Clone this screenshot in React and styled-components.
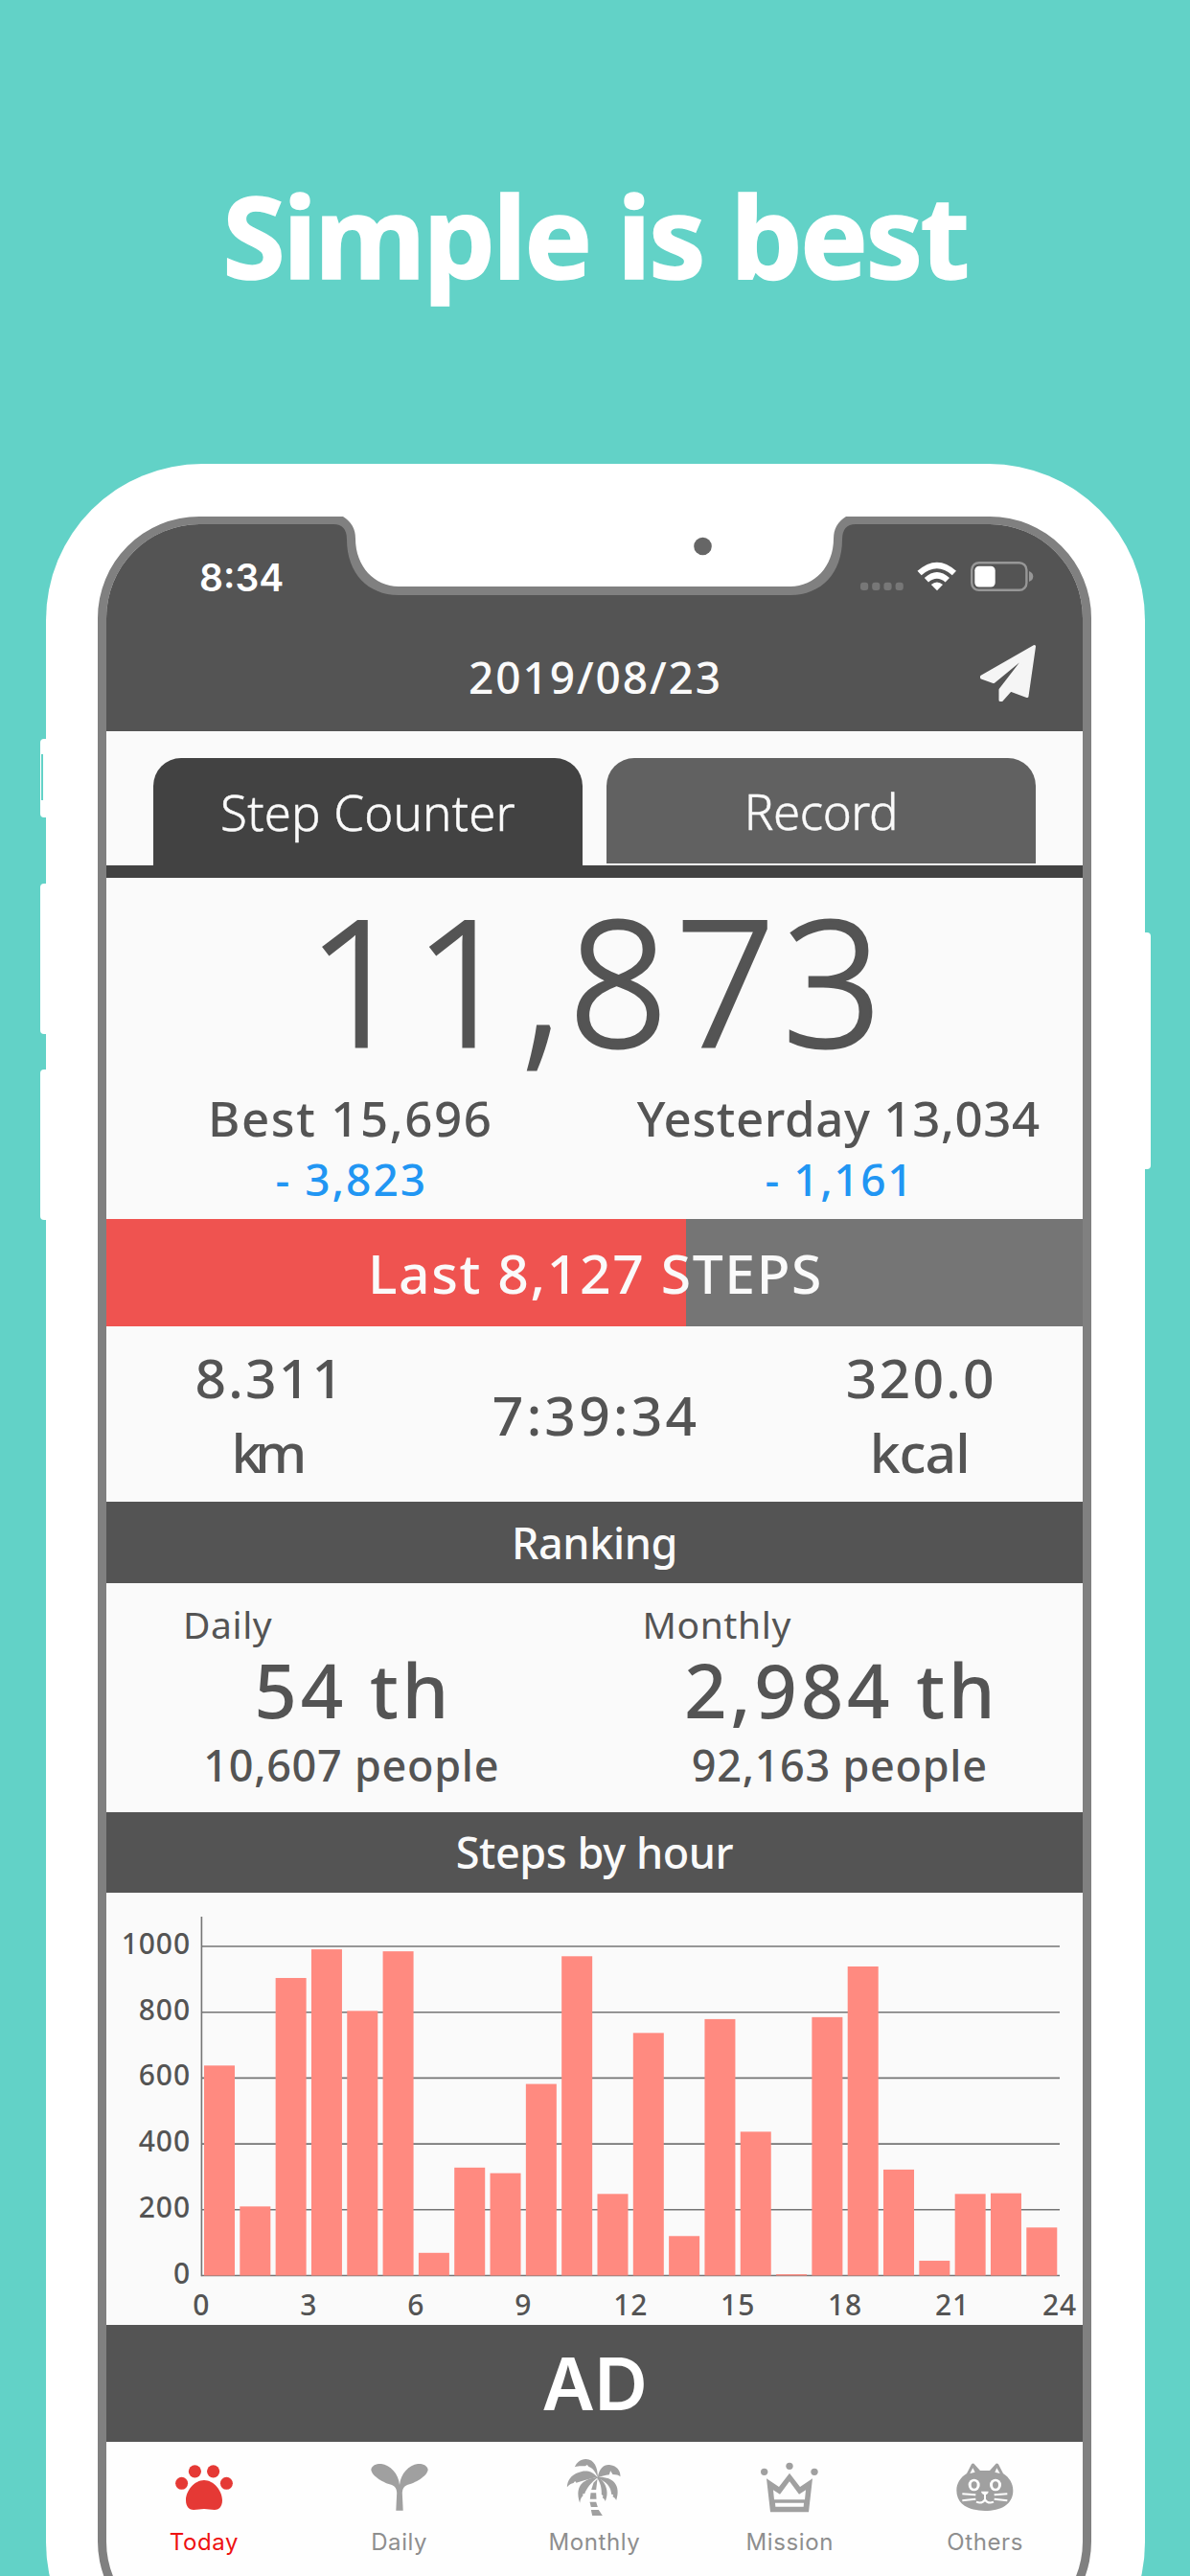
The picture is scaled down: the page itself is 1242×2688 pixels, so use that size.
import React from 'react';
import styled, { createGlobalStyle } from 'styled-components';

const GlobalStyle = createGlobalStyle`
  * {
    box-sizing: border-box;
  }

  body {
    margin: 0;
    background-color: #62d2c7;
    font-family: 'Noto Sans', 'Open Sans', sans-serif;
    font-weight: 500;
    color: #545454;
  }
`;

// Page
const Page = styled.div`
  width: 1242px;
  height: 2688px;
  overflow: hidden;
  background-color: #62d2c7;
`;

const Title = styled.h1`
  margin: 0;
  height: 484px;
  line-height: 490px;
  text-align: center;
  color: #fff;
  font-size: 119px;
  font-weight: 700;
  letter-spacing: -2.6px;
  -webkit-text-stroke: 1.5px #fff;
`;

// Phone body
const Phone = styled.div`
  position: relative;
  width: 1147px;
  height: 2332px;
  margin-left: 48px;
  padding: 55px 56px 0 54px;
  background-color: #fff;
  border-radius: 163px;
`;

// Physical buttons that stick out of the phone's edge
const SideButton = styled.span`
  position: absolute;
  top: ${({ $top }) => $top}px;
  ${({ $side }) => $side}: -6px;
  width: 14px;
  height: ${({ $height }) => $height}px;
  border-radius: 4px;
  background-color: #fff;
`;

const MuteLine = styled.span`
  position: absolute;
  top: 303px;
  left: -5px;
  width: 2px;
  height: 48px;
  background-color: #62d2c7;
`;

const Screen = styled.div`
  display: flex;
  flex-direction: column;
  height: 2219px;
  border: 9px solid #808080;
  border-top-width: 8px;
  border-radius: 106px;
  overflow: hidden;
  background-color: #fefefe;
`;

const Notch = styled.svg`
  position: absolute;
  top: 53px;
  left: 292px;
`;

// Header
const Header = styled.header`
  flex: none;
  height: 216px;
  background-color: #545454;
  color: #fafafa;
`;

const StatusBar = styled.div`
  display: flex;
  align-items: center;
  justify-content: space-between;
  height: 110px;
  padding: 0 51px 0 97px;
`;

const Clock = styled.span`
  color: #fff;
  font-family: Inter, sans-serif;
  font-size: 39px;
  font-weight: 600;
`;

const StatusIcons = styled.div`
  display: flex;
  align-items: center;
`;

const DateBar = styled.div`
  display: grid;
  grid-template-columns: 1fr auto 1fr;
  align-items: center;
  height: 97px;
  padding: 0 48px;
`;

const DateText = styled.span`
  grid-column: 2;
  font-size: 46px;
  letter-spacing: 1.9px;
  text-indent: 2px;
`;

const ShareButton = styled.button`
  justify-self: end;
  display: flex;
  padding: 0;
  border: none;
  background: none;
  color: #f5f5f5;
  margin-top: -8px;
`;

// Tabs
const Tabs = styled.div`
  flex: none;
  display: flex;
  gap: 25px;
  height: 153px;
  padding: 28px 49px 0 49px;
  border-bottom: 13px solid #424242;
  background-color: #fafafa;
`;

const Tab = styled.button`
  flex: 1;
  height: ${({ $active }) => ($active ? 112 : 110)}px;
  padding: 0;
  border: none;
  border-radius: 29px 29px 0 0;
  background-color: ${({ $active }) => ($active ? '#424242' : '#616161')};
  color: #fafafa;
  font-family: inherit;
  font-size: 51px;
  font-weight: 300;
  letter-spacing: ${({ $spacing }) => $spacing}px;
  -webkit-text-stroke: 0.5px #fafafa;
`;

// Steps of today
const Counter = styled.section`
  flex: none;
  height: 356px;
  background-color: #fafafa;
`;

const Count = styled.div`
  height: 210px;
  line-height: 210px;
  text-align: center;
  text-indent: 8px;
  font-size: 183px;
  font-weight: 300;
  letter-spacing: 7.4px;
  -webkit-text-stroke: 2.8px #545454;
`;

const Columns = styled.div`
  display: grid;
  grid-template-columns: repeat(${({ $count }) => $count}, 1fr);
  text-align: center;
`;

const Compare = styled.div`
  font-size: 51px;
  line-height: 81px;
  white-space: nowrap;
  letter-spacing: ${({ $spacing }) => $spacing}px;
`;

const Difference = styled.div`
  color: #2196f3;
  font-size: 46px;
  line-height: 46px;
  letter-spacing: ${({ $spacing }) => $spacing}px;
  text-indent: 2px;
`;

// Goal progress
const Progress = styled.div`
  flex: none;
  height: 112px;
  line-height: 112px;
  text-align: center;
  text-indent: 2px;
  color: #fafafa;
  font-size: 57px;
  letter-spacing: 1.6px;
  background: linear-gradient(
    to right,
    #ef5350 ${({ $percent }) => $percent}%,
    #757575 ${({ $percent }) => $percent}%
  );
`;

const Stats = styled(Columns)`
  flex: none;
  align-items: center;
  height: 183px;
  background-color: #fafafa;
  font-size: 57px;
  line-height: 78px;
`;

const StatLine = styled.div`
  letter-spacing: ${({ $spacing }) => $spacing}px;
  text-indent: ${({ $spacing }) => $spacing}px;
`;

const SectionTitle = styled.h2`
  flex: none;
  margin: 0;
  height: ${({ $height }) => $height}px;
  line-height: ${({ $height }) => $height}px;
  text-align: center;
  background-color: #545454;
  color: #fafafa;
  font-size: 45px;
  font-weight: 500;
  letter-spacing: -0.4px;
`;

// Ranking
const Ranking = styled(Columns)`
  flex: none;
  height: 239px;
  padding-top: 10px;
  background-color: #fafafa;
`;

const RankLabel = styled.div`
  padding-left: ${({ $indent }) => $indent}px;
  text-align: left;
  font-size: 39px;
  font-weight: 400;
  line-height: 66px;
  letter-spacing: 0.6px;
`;

const RankValue = styled.div`
  font-size: 78px;
  line-height: 71px;
  letter-spacing: 3.7px;
  text-indent: 6px;
`;

const RankPeople = styled.div`
  font-size: 45px;
  line-height: 86px;
  letter-spacing: 0.7px;
  text-indent: 2px;
`;

// Chart
const ChartBox = styled.svg`
  flex: none;
  display: block;
  background-color: #fafafa;
  font-size: 30px;
  letter-spacing: 0.9px;
`;

const Ad = styled.div`
  flex: none;
  height: 122px;
  line-height: 122px;
  text-align: center;
  background-color: #545454;
  color: #fff;
  font-family: Inter, sans-serif;
  font-size: 76px;
  font-weight: 600;
`;

// Bottom navigation
const Nav = styled.nav`
  display: grid;
  grid-template-columns: repeat(5, 1fr);
  padding-top: 18px;
`;

const NavItem = styled.div`
  display: flex;
  flex-direction: column;
  align-items: center;
  color: ${({ $active }) => ($active ? '#e53935' : '#a0a0a0')};
`;

const NavLabel = styled.span`
  color: ${({ $active }) => ($active ? '#ee1111' : '#8e8e8e')};
  font-family: Inter, sans-serif;
  font-size: 24px;
  font-weight: 400;
  line-height: 53px;
  letter-spacing: 0.6px;
`;

const PhoneNotch = () => (
  <Notch width="561" height="90" viewBox="340 537 561 90">
    <path
      fill="#808080"
      d="M340 539 V547 H348 Q362 547 362 563 C362 598 384 621 416 621 H825 C857 621 879 598 879 563 Q879 547 893 547 H901 V539 Z"
    />
    <path
      fill="#fff"
      d="M340 537 V539 H358 Q371 547 371 562 C371 591 391 612 416 612 H825 C850 612 870 591 870 562 Q870 547 883 539 H901 V537 Z"
    />
    <circle cx="733.5" cy="570" r="9.3" fill="#666" />
  </Notch>
);

// Signal dots, wifi and battery
const StatusGlyphs = () => (
  <svg width="182" height="34" viewBox="897 585 182 34" fill="#fff">
    {[898, 910.2, 922.4, 934.6].map((x) => (
      <rect key={x} x={x} y="607.7" width="8.2" height="8.3" rx="3" fill="#777" />
    ))}
    <path d="M957.5 595.8 Q978 577.5 998 595.8 L993.8 600.2 Q978 586.5 961.7 600.2 Z" />
    <path d="M964.8 603 Q978 590.8 991 603 L986.6 607.4 Q978 600 969 607.4 Z" />
    <path d="M971.8 610 Q978 605 984 610 L978 616.3 Z" />
    <rect x="1014.2" y="587.2" width="57.2" height="28.6" rx="7.5" fill="none" stroke="#979797" strokeWidth="2.4" />
    <rect x="1017.3" y="590.7" width="21.4" height="21.8" rx="4.5" />
    <path d="M1074 596 Q1078.3 597.5 1078.3 601.5 Q1078.3 605.5 1074 607 Z" fill="#979797" />
  </svg>
);

const PlaneIcon = () => (
  <svg width="60" height="60" viewBox="0 0 60 60" fill="currentColor" stroke="currentColor">
    <path
      strokeWidth="3"
      strokeLinejoin="round"
      d="M2.5 34 L57.5 2.5 L50 54.5 L32.6 48.2 L23.5 58.5 H22 V47.6 L51.5 9.5 L15 39.5 L2.5 35 Z"
    />
  </svg>
);

const PawIcon = () => (
  <svg width="60" height="60" viewBox="0 0 60 60" fill="currentColor">
    <circle cx="6.6" cy="25.3" r="6.5" />
    <circle cx="20.4" cy="12.8" r="6.6" />
    <circle cx="39.6" cy="12.8" r="6.6" />
    <circle cx="53.4" cy="25.3" r="6.5" />
    <path d="M30 22 C40 22 49 33 49 43 C49 50 45 53 41 53 C37 53 34 52 30 52 C26 52 23 53 19 53 C15 53 11 50 11 43 C11 33 20 22 30 22 Z" />
  </svg>
);

const SproutIcon = () => (
  <svg width="60" height="60" viewBox="0 0 60 60" fill="currentColor">
    <path d="M26.3 53.7 L27.2 35 Q27 29 22 27 C14 25 1 18 0.3 11 C1 6 7 4.6 11 5 C20 6 29 15 30 27 C31 15 40 6 49 5 C53 4.6 59 6 59.7 11 C59 18 46 25 38 27 Q33 29 32.8 35 L33.7 53.7 Z" />
  </svg>
);

const PalmIcon = () => (
  <svg width="60" height="60" viewBox="61.5 18 180 180" fill="currentColor">
    <path d="M163 76 C164 45 152 18 126 18 C108 18 97 29 91 43 C104 38 115 40 124 40 L130 36 L135 42 C150 48 157 60 163 76 Z" />
    <path d="M163 76 C145 52 120 52 103 60 C80 68 68 84 67 106 C74 98 80 94 87 93 L92 87 L96 92 C115 88 135 78 163 76 Z" />
    <path d="M163 74 C125 80 88 95 107 155 C110 140 112 138 117 133 L116 127 L122 127 C128 110 142 92 163 76 Z" />
    <path d="M163 76 C168 45 185 33 203 37 C222 40 234 52 234 73 C228 68 222 66 210 66 L203 55 L199 67 C185 68 175 72 163 76 Z" />
    <path d="M163 74 C210 72 237 98 221 147 C218 140 214 138 210 136 L212 130 L206 128 C205 105 190 88 163 78 Z" />
    <path d="M161 74 C186 84 201 118 187 150 C184 144 181 141 178 139 L180 133 L175 129 C176 110 171 90 161 78 Z" />
    <path d="M150 92 L162 80 L158 114 H143 Z M141 124 H158 L159 143 H139 Z M138 152 H158 L163 168 H142 Z M142 177 H166 L178 195 H146 Z" />
  </svg>
);

const CrownIcon = () => (
  <svg width="60" height="60" viewBox="672 18 180 180" fill="currentColor">
    <circle cx="683" cy="58" r="11" />
    <circle cx="762" cy="40" r="11" />
    <circle cx="840" cy="58" r="11" />
    <path
      fillRule="evenodd"
      d="M690 79 L729 105 L762 62 L795 105 L834 79 L822 184 H702 Z M711 115 L732 128 L762 88 L792 128 L813 115 L810 145 H714 Z M717 155 H807 L806 167 H718 Z"
    />
  </svg>
);

const CatIcon = () => (
  <svg width="60" height="60" viewBox="1286 18 180 180" fill="currentColor">
    <path d="M1334 34 Q1339 29 1344 35 L1361 54 H1391 L1408 35 Q1413 29 1418 34 L1433 63 C1453 76 1464 95 1464 116 C1464 160 1425 180 1376 180 C1327 180 1287 160 1287 116 C1287 95 1298 76 1319 63 Z" />
    <g fill="#fefefe">
      <path d="M1338 46 L1329 63 L1345 59 Z M1413 46 L1407 59 L1423 63 Z" />
      <ellipse cx="1342" cy="99" rx="18" ry="19" />
      <ellipse cx="1409" cy="99" rx="18" ry="19" />
      <path d="M1364 119 H1387 Q1386 129 1376 130 Q1366 129 1364 119 Z" />
    </g>
    <ellipse cx="1342" cy="99" rx="9" ry="11" />
    <ellipse cx="1409" cy="99" rx="9" ry="11" />
    <path
      fill="none"
      stroke="#fefefe"
      strokeWidth="6"
      d="M1376 124 V146 M1349 152 Q1366 160 1376 145 Q1386 160 1403 152 M1305 127 L1347 130 M1305 148 L1347 143 M1405 130 L1446 127 M1405 143 L1446 148"
    />
  </svg>
);

const hourlySteps = [
  638, 210, 904, 991, 804, 985, 69, 328, 311, 582, 970, 248, 737, 120, 779, 437, 4, 785, 939, 322, 45, 248, 250, 146,
];

const CHART_LEFT = 210.4;
const CHART_RIGHT = 1106;
const CHART_BOTTOM = 2374.5;
const STEP_HEIGHT = 0.3435;
const HOUR_WIDTH = (CHART_RIGHT - CHART_LEFT) / 24;

const StepsChart = () => (
  <ChartBox width="1019" height="451" viewBox="111 1975 1019 451">
    {[0, 200, 400, 600, 800, 1000].map((value) => {
      const y = CHART_BOTTOM - value * STEP_HEIGHT;
      return (
        <g key={value}>
          <line x1={CHART_LEFT} x2={CHART_RIGHT} y1={y} y2={y} stroke="#757575" strokeWidth="1.6" />
          <text x="199" y={y + 8} textAnchor="end" fill="#545454">
            {value}
          </text>
        </g>
      );
    })}
    <line x1={CHART_LEFT} x2={CHART_LEFT} y1="2000" y2={CHART_BOTTOM + 0.8} stroke="#757575" strokeWidth="1.6" />
    {hourlySteps.map((steps, hour) => (
      <rect
        key={hour}
        x={CHART_LEFT + 2.6 + hour * HOUR_WIDTH}
        y={CHART_BOTTOM - steps * STEP_HEIGHT}
        width="32"
        height={steps * STEP_HEIGHT}
        fill="#ff8a80"
      />
    ))}
    {[0, 3, 6, 9, 12, 15, 18, 21, 24].map((hour) => (
      <text key={hour} x={CHART_LEFT + hour * HOUR_WIDTH} y="2416" textAnchor="middle" fill="#545454">
        {hour}
      </text>
    ))}
  </ChartBox>
);

const navItems = [
  { label: 'Today', Icon: PawIcon, active: true },
  { label: 'Daily', Icon: SproutIcon },
  { label: 'Monthly', Icon: PalmIcon },
  { label: 'Mission', Icon: CrownIcon },
  { label: 'Others', Icon: CatIcon },
];

const App = () => (
  <Page>
    <GlobalStyle />
    <Title>Simple is best</Title>
    <Phone>
      <SideButton $side="left" $top={287} $height={82} />
      <MuteLine />
      <SideButton $side="left" $top={438} $height={157} />
      <SideButton $side="left" $top={632} $height={157} />
      <SideButton $side="right" $top={489} $height={247} />
      <Screen>
        <Header>
          <StatusBar>
            <Clock>8:34</Clock>
            <StatusIcons>
              <StatusGlyphs />
            </StatusIcons>
          </StatusBar>
          <DateBar>
            <DateText>2019/08/23</DateText>
            <ShareButton>
              <PlaneIcon />
            </ShareButton>
          </DateBar>
        </Header>
        <Tabs>
          <Tab $active $spacing={0.2}>
            Step Counter
          </Tab>
          <Tab $spacing={-0.4}>Record</Tab>
        </Tabs>
        <Counter>
          <Count>11,873</Count>
          <Columns $count={2}>
            <div>
              <Compare $spacing={1.6}>Best 15,696</Compare>
              <Difference $spacing={2}>- 3,823</Difference>
            </div>
            <div>
              <Compare $spacing={0.6}>Yesterday 13,034</Compare>
              <Difference $spacing={1.6}>- 1,161</Difference>
            </div>
          </Columns>
        </Counter>
        <Progress $percent={59.4}>Last 8,127 STEPS</Progress>
        <Stats $count={3}>
          <div>
            <StatLine $spacing={2.2}>8.311</StatLine>
            <StatLine $spacing={-7}>km</StatLine>
          </div>
          <StatLine $spacing={3.2}>7:39:34</StatLine>
          <div>
            <StatLine $spacing={2.2}>320.0</StatLine>
            <StatLine $spacing={-1}>kcal</StatLine>
          </div>
        </Stats>
        <SectionTitle $height={85}>Ranking</SectionTitle>
        <Ranking $count={2}>
          <div>
            <RankLabel $indent={80}>Daily</RankLabel>
            <RankValue>54 th</RankValue>
            <RankPeople>10,607 people</RankPeople>
          </div>
          <div>
            <RankLabel $indent={50}>Monthly</RankLabel>
            <RankValue>2,984 th</RankValue>
            <RankPeople>92,163 people</RankPeople>
          </div>
        </Ranking>
        <SectionTitle $height={84}>Steps by hour</SectionTitle>
        <StepsChart />
        <Ad>AD</Ad>
        <Nav>
          {navItems.map(({ label, Icon, active }) => (
            <NavItem key={label} $active={active}>
              <Icon />
              <NavLabel $active={active}>{label}</NavLabel>
            </NavItem>
          ))}
        </Nav>
      </Screen>
      <PhoneNotch />
    </Phone>
  </Page>
);

export default App;
